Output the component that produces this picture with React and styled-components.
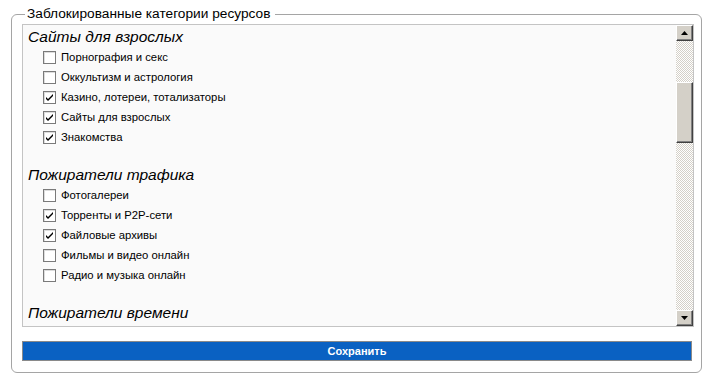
import React from "react";
import styled, { createGlobalStyle } from "styled-components";

const Global = createGlobalStyle`
  html, body { margin: 0; padding: 0; background: #ffffff; }
  body { font-family: "Liberation Sans", Arial, sans-serif; }
`;

const Page = styled.div`
  width: 713px;
  height: 384px;
  padding: 6px 0 0 11px;
  box-sizing: border-box;
`;

const Fieldset = styled.fieldset`
  width: 691px;
  box-sizing: border-box;
  margin: 0;
  padding: 2px 7px 11px 10px;
  border: 1px solid #a5a5a5;
  border-radius: 6px;
  min-inline-size: 0;
`;

const Legend = styled.legend`
  margin-left: 3px;
  padding: 0 5px 0 2px;
  font-size: 13.7px;
  line-height: 16px;
  color: #000;
`;

const ListBox = styled.div`
  display: flex;
  height: 303px;
  box-sizing: border-box;
  border: 1px solid #c4c4c4;
  background: #fafafa;
`;

const Content = styled.div`
  flex: 1;
  overflow: hidden;
  padding: 1px 5px 0 5px;
`;

const Group = styled.div`
  margin-bottom: 17px;
`;

const Heading = styled.div`
  height: 21px;
  line-height: 21px;
  font-size: 15.5px;
  font-style: italic;
  color: #000;
  white-space: nowrap;
`;

const Row = styled.label`
  display: flex;
  align-items: center;
  height: 20px;
  padding-left: 15px;
  font-size: 11.3px;
  color: #000;
  gap: 5px;
  white-space: nowrap;
`;

const Box = styled.span`
  width: 13px;
  height: 13px;
  flex: none;
  box-sizing: border-box;
  border: 1px solid #7a7a7a;
  background: #fff;
  box-shadow: inset 1px 1px 0 #dcdcdc;
  display: flex;
  align-items: center;
  justify-content: center;
`;

const Scrollbar = styled.div`
  width: 17px;
  display: flex;
  flex-direction: column;
  background: repeating-conic-gradient(#d4d0c8 0 25%, #ffffff 0 50%) 0 0 / 2px 2px;
`;

const ArrowBtn = styled.div`
  height: 16px;
  box-sizing: border-box;
  background: #d4d0c8;
  border-top: 1px solid #ffffff;
  border-left: 1px solid #ffffff;
  border-right: 1px solid #404040;
  border-bottom: 1px solid #404040;
  box-shadow: inset -1px -1px 0 #808080;
  display: flex;
  align-items: center;
  justify-content: center;
`;

const Track = styled.div`
  flex: 1;
  display: flex;
  flex-direction: column;
`;

const Thumb = styled.div`
  margin-top: ${(p) => p.$top}px;
  height: ${(p) => p.$height}px;
  box-sizing: border-box;
  background: #d4d0c8;
  border-top: 1px solid #ffffff;
  border-left: 1px solid #ffffff;
  border-right: 1px solid #404040;
  border-bottom: 1px solid #404040;
  box-shadow: inset -1px -1px 0 #808080;
`;

const SaveButton = styled.button`
  display: block;
  margin-top: 14px;
  width: 670px;
  height: 20px;
  padding: 0;
  box-sizing: border-box;
  border: 1px solid #8a8a8a;
  background: #0a61c2;
  color: #ffffff;
  font-family: "Liberation Sans", Arial, sans-serif;
  font-weight: bold;
  font-size: 11px;
  cursor: pointer;
`;

const Check = ({ on }) => (
  <Box>
    {on && (
      <svg width="9" height="9" viewBox="0 0 9 9">
        <path d="M1 4 L3 6 L8 1 L8 3 L3 8 L1 6 Z" fill="#000" />
      </svg>
    )}
  </Box>
);

const groups = [
  {
    title: "Сайты для взрослых",
    items: [
      ["Порнография и секс", false],
      ["Оккультизм и астрология", false],
      ["Казино, лотереи, тотализаторы", true],
      ["Сайты для взрослых", true],
      ["Знакомства", true],
    ],
  },
  {
    title: "Пожиратели трафика",
    items: [
      ["Фотогалереи", false],
      ["Торренты и P2P-сети", true],
      ["Файловые архивы", true],
      ["Фильмы и видео онлайн", false],
      ["Радио и музыка онлайн", false],
    ],
  },
  {
    title: "Пожиратели времени",
    items: [],
  },
];

export default function App() {
  return (
    <Page>
      <Global />
      <Fieldset>
        <Legend>Заблокированные категории ресурсов</Legend>
        <ListBox>
          <Content>
            {groups.map((g) => (
              <Group key={g.title}>
                <Heading>{g.title}</Heading>
                {g.items.map(([label, on]) => (
                  <Row key={label}>
                    <Check on={on} />
                    {label}
                  </Row>
                ))}
              </Group>
            ))}
          </Content>
          <Scrollbar>
            <ArrowBtn>
              <svg width="7" height="4" viewBox="0 0 7 4">
                <path d="M3.5 0 L7 4 L0 4 Z" fill="#000" />
              </svg>
            </ArrowBtn>
            <Track>
              <Thumb $top={41} $height={61} />
            </Track>
            <ArrowBtn>
              <svg width="7" height="4" viewBox="0 0 7 4">
                <path d="M0 0 L7 0 L3.5 4 Z" fill="#000" />
              </svg>
            </ArrowBtn>
          </Scrollbar>
        </ListBox>
        <SaveButton>Сохранить</SaveButton>
      </Fieldset>
    </Page>
  );
}
